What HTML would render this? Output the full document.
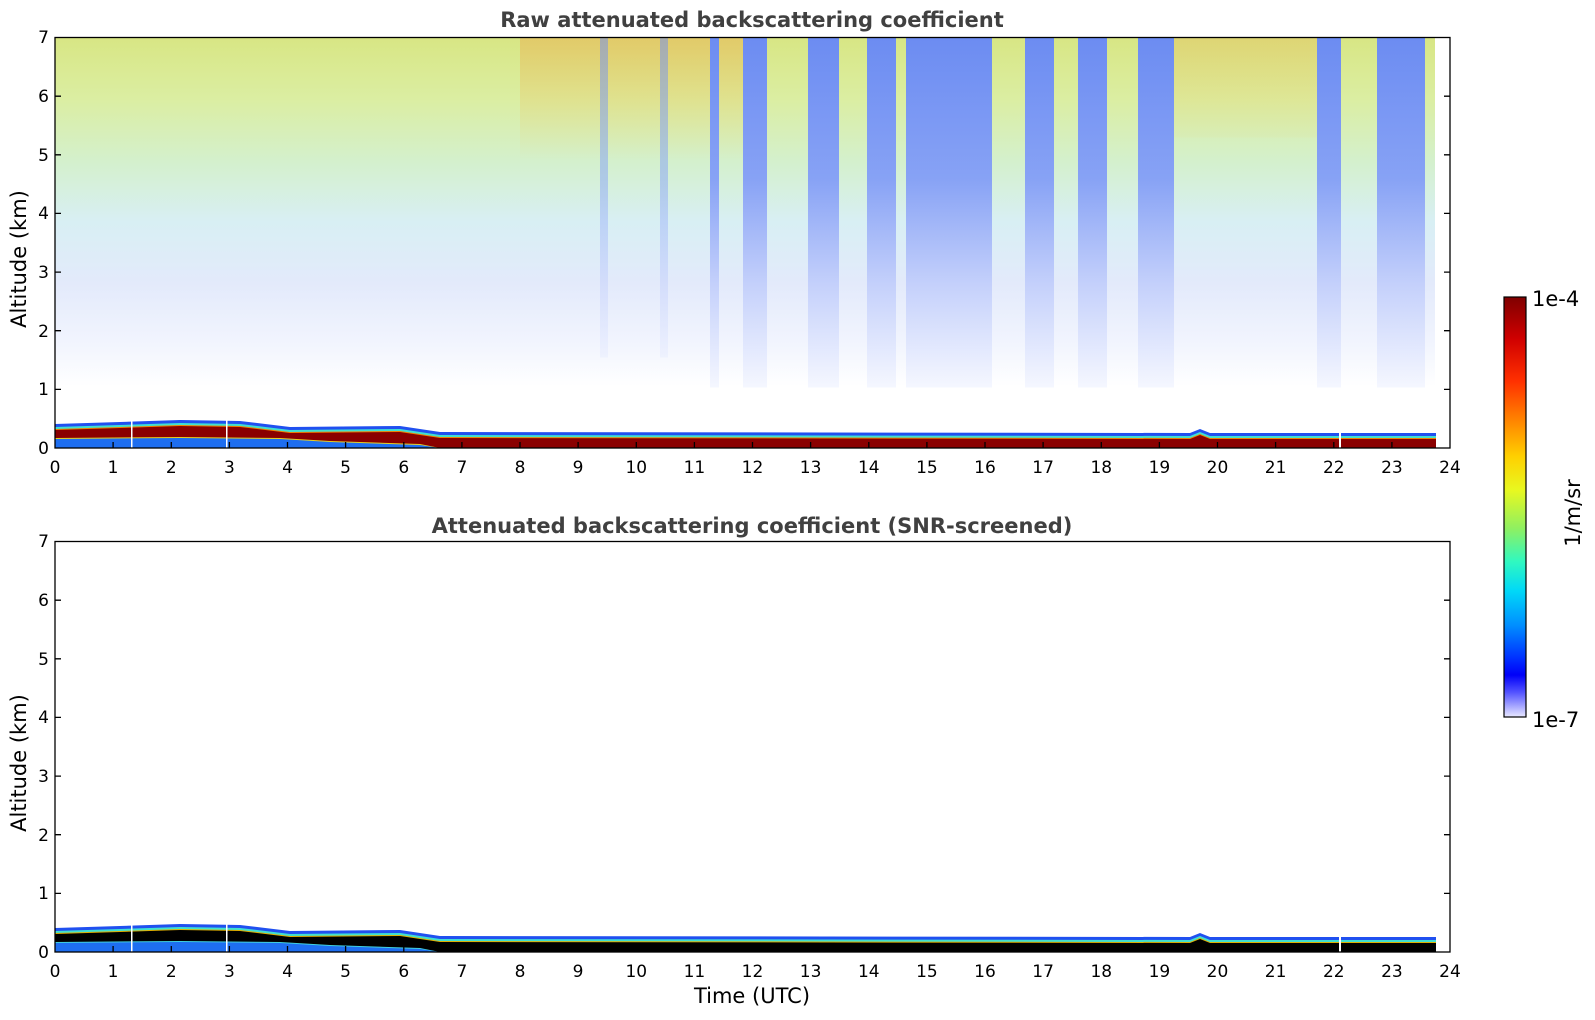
<!DOCTYPE html>
<html><head><meta charset="utf-8"><style>
html,body{margin:0;padding:0;background:#fff;}
svg{display:block;font-family:"DejaVu Sans","Liberation Sans",sans-serif;}
</style></head><body>
<svg width="1595" height="1020" viewBox="0 0 1595 1020" xmlns="http://www.w3.org/2000/svg">
<defs>
<linearGradient id="bgv" x1="0" y1="37.5" x2="0" y2="448" gradientUnits="userSpaceOnUse">
<stop offset="0" stop-color="#d8e684"/>
<stop offset="0.15" stop-color="#dbeea2"/>
<stop offset="0.3" stop-color="#d4f0cc"/>
<stop offset="0.45" stop-color="#d8eff4"/>
<stop offset="0.6" stop-color="#e3eafb"/>
<stop offset="0.75" stop-color="#f2f5fe"/>
<stop offset="0.85" stop-color="#ffffff"/>
<stop offset="1" stop-color="#ffffff"/>
</linearGradient>
<linearGradient id="orange" x1="0" y1="37.5" x2="0" y2="160" gradientUnits="userSpaceOnUse">
<stop offset="0" stop-color="#f0a040" stop-opacity="0.4"/>
<stop offset="1" stop-color="#f0c040" stop-opacity="0"/>
</linearGradient>
<linearGradient id="stripe" x1="0" y1="37.5" x2="0" y2="390" gradientUnits="userSpaceOnUse">
<stop offset="0" stop-color="#6c8cf2"/>
<stop offset="0.4" stop-color="#87a2f5"/>
<stop offset="0.7" stop-color="#c4d0fb"/>
<stop offset="1" stop-color="#f6f8ff"/>
</linearGradient>
<linearGradient id="cb" x1="0" y1="297" x2="0" y2="717" gradientUnits="userSpaceOnUse">
<stop offset="0" stop-color="#7f0000"/>
<stop offset="0.1" stop-color="#d00000"/>
<stop offset="0.2" stop-color="#ff3000"/>
<stop offset="0.3" stop-color="#ff8a00"/>
<stop offset="0.38" stop-color="#ffd000"/>
<stop offset="0.46" stop-color="#e8f820"/>
<stop offset="0.55" stop-color="#90f060"/>
<stop offset="0.63" stop-color="#30f8c0"/>
<stop offset="0.7" stop-color="#00d8f8"/>
<stop offset="0.78" stop-color="#0090ff"/>
<stop offset="0.86" stop-color="#0030ff"/>
<stop offset="0.9" stop-color="#0000f8"/>
<stop offset="0.94" stop-color="#5050ff"/>
<stop offset="1" stop-color="#e8e8ff"/>
</linearGradient>
</defs>

<!-- TOP PLOT -->
<text x="752" y="27" text-anchor="middle" font-size="21" font-weight="bold" fill="#404040">Raw attenuated backscattering coefficient</text>
<rect x="55" y="37.5" width="1380" height="410" fill="url(#bgv)"/>
<rect x="520" y="37.5" width="230" height="130" fill="url(#orange)"/>
<rect x="1170" y="37.5" width="150" height="100" fill="url(#orange)" opacity="0.6"/>
<g fill="url(#stripe)">
<rect x="710" y="37.5" width="9" height="350"/>
<rect x="743" y="37.5" width="24" height="350"/>
<rect x="808" y="37.5" width="31" height="350"/>
<rect x="867" y="37.5" width="29" height="350"/>
<rect x="906" y="37.5" width="86" height="350"/>
<rect x="1025" y="37.5" width="29" height="350"/>
<rect x="1078" y="37.5" width="29" height="350"/>
<rect x="1138" y="37.5" width="36" height="350"/>
<rect x="1317" y="37.5" width="24" height="350"/>
<rect x="1377" y="37.5" width="48" height="350"/>
<rect x="600" y="37.5" width="8" height="320" opacity="0.5"/>
<rect x="660" y="37.5" width="8" height="320" opacity="0.5"/>
</g>
<rect x="1436" y="37.5" width="14" height="411" fill="#fff"/>
<polygon points="55,424 120,422 180,420 240,421 290,427 400,426 440,432 1190,433 1200,429 1210,433 1436,433 1436,448 55,448" fill="#2050f0"/>
<polygon points="55,427 120,425 180,423 240,424 290,430 400,429 440,435 1190,436 1200,432 1210,436 1436,436 1436,448 55,448" fill="#40e0d0"/>
<polygon points="55,429 120,427 180,425 240,426 290,432 400,431 440,437 1190,438 1200,434 1210,438 1436,438 1436,448 55,448" fill="#f08000"/>
<polygon points="55,430 120,428 180,426 240,427 290,433 400,432 440,438 1190,439 1200,435 1210,439 1436,439 1436,448 55,448" fill="#8a0000"/>
<polygon points="55,438 180,437 280,438 330,441 420,444 440,448 55,448" fill="#e8d020"/>
<polygon points="55,439 180,438 280,439 330,442 420,445 440,448 55,448" fill="#1e6ef0"/>
<g fill="#fff"><rect x="131" y="420" width="1.5" height="28"/><rect x="226" y="420" width="1.5" height="28"/><rect x="1339" y="430" width="2" height="18"/><rect x="1438" y="428" width="2" height="20"/></g>
<rect x="55" y="37.5" width="1395" height="410.5" fill="none" stroke="#000" stroke-width="1.3"/>
<path d="M55,389.4h6M55,330.7h6M55,272.1h6M55,213.4h6M55,154.8h6M55,96.2h6M1450,389.4h-6M1450,330.7h-6M1450,272.1h-6M1450,213.4h-6M1450,154.8h-6M1450,96.2h-6" stroke="#000" stroke-width="1.3"/>
<path d="M113.1,448v-6M171.3,448v-6M229.4,448v-6M287.5,448v-6M345.6,448v-6M403.8,448v-6M461.9,448v-6M520,448v-6M578.1,448v-6M636.3,448v-6M694.4,448v-6M752.5,448v-6M810.6,448v-6M868.8,448v-6M926.9,448v-6M985,448v-6M1043.1,448v-6M1101.3,448v-6M1159.4,448v-6M1217.5,448v-6M1275.6,448v-6M1333.8,448v-6M1391.9,448v-6" stroke="#000" stroke-width="1.3"/>
<g font-size="17" text-anchor="end" fill="#000">
<text x="49" y="454">0</text><text x="49" y="395">1</text><text x="49" y="337">2</text><text x="49" y="278">3</text><text x="49" y="219">4</text><text x="49" y="161">5</text><text x="49" y="102">6</text><text x="49" y="43">7</text>
</g>
<g font-size="17" text-anchor="middle" fill="#000">
<text x="55" y="473">0</text><text x="113.1" y="473">1</text><text x="171.3" y="473">2</text><text x="229.4" y="473">3</text><text x="287.5" y="473">4</text><text x="345.6" y="473">5</text><text x="403.8" y="473">6</text><text x="461.9" y="473">7</text><text x="520" y="473">8</text><text x="578.1" y="473">9</text><text x="636.3" y="473">10</text><text x="694.4" y="473">11</text><text x="752.5" y="473">12</text><text x="810.6" y="473">13</text><text x="868.8" y="473">14</text><text x="926.9" y="473">15</text><text x="985" y="473">16</text><text x="1043.1" y="473">17</text><text x="1101.3" y="473">18</text><text x="1159.4" y="473">19</text><text x="1217.5" y="473">20</text><text x="1275.6" y="473">21</text><text x="1333.8" y="473">22</text><text x="1391.9" y="473">23</text><text x="1450" y="473">24</text>
</g>
<text transform="translate(26,259) rotate(-90)" text-anchor="middle" font-size="21" fill="#000">Altitude (km)</text>

<!-- BOTTOM PLOT -->
<text x="752" y="533" text-anchor="middle" font-size="21" font-weight="bold" fill="#404040">Attenuated backscattering coefficient (SNR-screened)</text>
<g transform="translate(0,504)">
<polygon points="55,424 120,422 180,420 240,421 290,427 400,426 440,432 1190,433 1200,429 1210,433 1436,433 1436,448 55,448" fill="#2050f0"/>
<polygon points="55,427 120,425 180,423 240,424 290,430 400,429 440,435 1190,436 1200,432 1210,436 1436,436 1436,448 55,448" fill="#40e0d0"/>
<polygon points="55,429 120,427 180,425 240,426 290,432 400,431 440,437 1190,438 1200,434 1210,438 1436,438 1436,448 55,448" fill="#e0b000"/>
<polygon points="55,430 120,428 180,426 240,427 290,433 400,432 440,438 1190,439 1200,435 1210,439 1436,439 1436,448 55,448" fill="#000"/>
<polygon points="55,438 180,437 280,438 330,441 420,444 440,448 55,448" fill="#40d0e0"/>
<polygon points="55,439 180,438 280,439 330,442 420,445 440,448 55,448" fill="#1e6ef0"/>
<g fill="#fff"><rect x="131" y="420" width="1.5" height="28"/><rect x="226" y="420" width="1.5" height="28"/><rect x="1339" y="430" width="2" height="18"/><rect x="1438" y="428" width="2" height="20"/></g>
<rect x="55" y="37.5" width="1395" height="410.5" fill="none" stroke="#000" stroke-width="1.3"/>
<path d="M55,389.4h6M55,330.7h6M55,272.1h6M55,213.4h6M55,154.8h6M55,96.2h6M1450,389.4h-6M1450,330.7h-6M1450,272.1h-6M1450,213.4h-6M1450,154.8h-6M1450,96.2h-6" stroke="#000" stroke-width="1.3"/>
<path d="M113.1,448v-6M171.3,448v-6M229.4,448v-6M287.5,448v-6M345.6,448v-6M403.8,448v-6M461.9,448v-6M520,448v-6M578.1,448v-6M636.3,448v-6M694.4,448v-6M752.5,448v-6M810.6,448v-6M868.8,448v-6M926.9,448v-6M985,448v-6M1043.1,448v-6M1101.3,448v-6M1159.4,448v-6M1217.5,448v-6M1275.6,448v-6M1333.8,448v-6M1391.9,448v-6" stroke="#000" stroke-width="1.3"/>
<g font-size="17" text-anchor="end" fill="#000">
<text x="49" y="454">0</text><text x="49" y="395">1</text><text x="49" y="337">2</text><text x="49" y="278">3</text><text x="49" y="219">4</text><text x="49" y="161">5</text><text x="49" y="102">6</text><text x="49" y="43">7</text>
</g>
<g font-size="17" text-anchor="middle" fill="#000">
<text x="55" y="473">0</text><text x="113.1" y="473">1</text><text x="171.3" y="473">2</text><text x="229.4" y="473">3</text><text x="287.5" y="473">4</text><text x="345.6" y="473">5</text><text x="403.8" y="473">6</text><text x="461.9" y="473">7</text><text x="520" y="473">8</text><text x="578.1" y="473">9</text><text x="636.3" y="473">10</text><text x="694.4" y="473">11</text><text x="752.5" y="473">12</text><text x="810.6" y="473">13</text><text x="868.8" y="473">14</text><text x="926.9" y="473">15</text><text x="985" y="473">16</text><text x="1043.1" y="473">17</text><text x="1101.3" y="473">18</text><text x="1159.4" y="473">19</text><text x="1217.5" y="473">20</text><text x="1275.6" y="473">21</text><text x="1333.8" y="473">22</text><text x="1391.9" y="473">23</text><text x="1450" y="473">24</text>
</g>
<text transform="translate(26,259) rotate(-90)" text-anchor="middle" font-size="21" fill="#000">Altitude (km)</text>
</g>
<text x="752" y="1003" text-anchor="middle" font-size="21" fill="#000">Time (UTC)</text>

<!-- COLORBAR -->
<rect x="1504" y="297" width="22" height="420" fill="url(#cb)" stroke="#000" stroke-width="1.2"/>
<text x="1532" y="306" font-size="21" fill="#000">1e-4</text>
<text x="1532" y="727" font-size="21" fill="#000">1e-7</text>
<text transform="translate(1580,513) rotate(-90)" text-anchor="middle" font-size="21" fill="#000">1/m/sr</text>
</svg>
</body></html>
